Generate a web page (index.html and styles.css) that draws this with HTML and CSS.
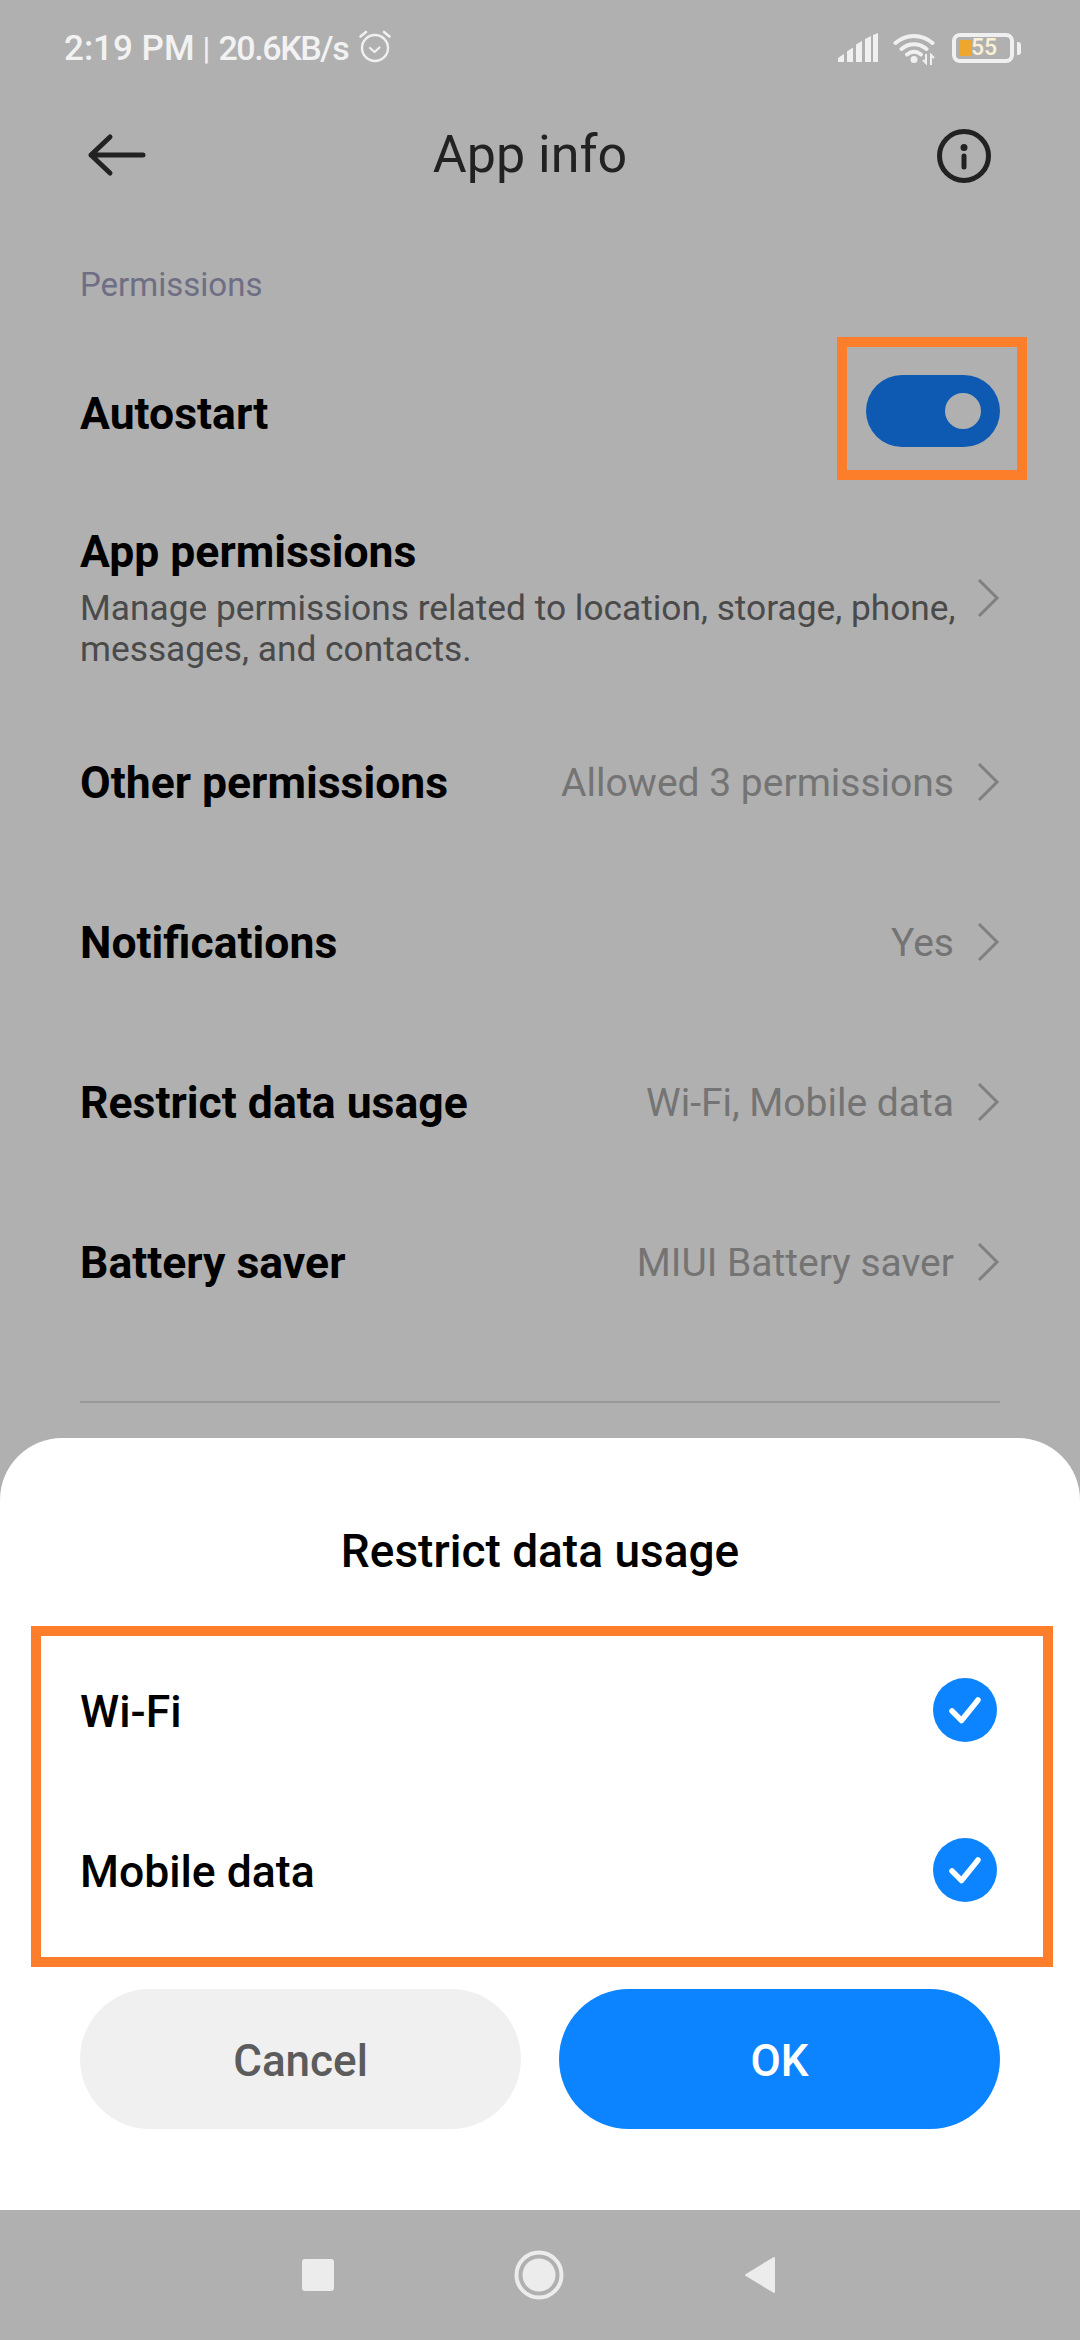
FILE: index.html
```html
<!DOCTYPE html>
<html>

<head>
    <meta name="viewport" content="width=device-width, initial-scale=1">
    <link rel="stylesheet" href="styles.css">
</head>

<body>
    <div class="screen">
        <div class="dimmed">
            <div class="statusBar">
                <span class="statusTime">2:19 PM</span>
                <span class="statusSep">|</span>
                <span class="statusSpeed">20.6KB/s</span>
                <svg class="alarmIcon" width="34" height="34" viewBox="0 0 34 34">
                    <circle cx="17" cy="19" r="13" fill="none" stroke="#f0f0f0" stroke-width="2.4" />
                    <path d="M12 19l4.5 4 5-4.5" fill="none" stroke="#f0f0f0" stroke-width="2.2" stroke-linecap="round" stroke-linejoin="round" />
                    <path d="M2.5 7.5L8 3M31.5 7.5L26 3" fill="none" stroke="#f0f0f0" stroke-width="2.6" stroke-linecap="round" />
                </svg>
                <div class="statusRight">
                    <svg class="signalIcon" width="42" height="30" viewBox="0 0 42 30">
                        <path d="M1 29v-4l6-4v8zM10 29V18.5l6-4V29zM19 29V11.5l6-3.5V29zM28 29V6l6-3v26zM36 29V2l5-2v29z" fill="#f0f0f0" />
                    </svg>
                    <svg class="wifiIcon" width="44" height="34" viewBox="0 0 44 34">
                        <path d="M2.5 11C13 1.5 29 1.5 39.5 11M8.5 17C16 10.5 26 10.5 33.5 17" fill="none" stroke="#f0f0f0" stroke-width="4" stroke-linecap="round" />
                        <path d="M14 22.5c4.5-3.5 9.5-3.5 14 0" fill="none" stroke="#f0f0f0" stroke-width="4" stroke-linecap="round" />
                        <circle cx="21" cy="27.5" r="3.5" fill="#f0f0f0" />
                        <path d="M33 22v9l-3-3M38 33v-10l3 3" fill="none" stroke="#f0f0f0" stroke-width="2" />
                    </svg>
                    <div class="battery">
                        <div class="batteryBody">
                            <div class="batteryFill"></div>
                            <span class="batteryText">55</span>
                        </div>
                        <div class="batteryNub"></div>
                    </div>
                </div>
            </div>

            <div class="header">
                <svg class="backIcon" width="62" height="48" viewBox="0 0 62 48">
                    <path d="M26 6L7 24l19 18M7 24h52" fill="none" stroke="#222" stroke-width="5" stroke-linecap="round" stroke-linejoin="round" />
                </svg>
                <h1 class="title">App info</h1>
                <svg class="infoIcon" width="56" height="56" viewBox="0 0 56 56">
                    <circle cx="28" cy="28" r="24.5" fill="none" stroke="#222" stroke-width="5" />
                    <circle cx="28" cy="19.5" r="3.5" fill="#222" />
                    <path d="M28 28v11" stroke="#222" stroke-width="5" stroke-linecap="round" />
                </svg>
            </div>

            <div class="sectionLabel">Permissions</div>

            <div class="row rowAutostart">
                <span class="rowName">Autostart</span>
                <div class="markBox">
                    <div class="toggle">
                        <div class="toggleKnob"></div>
                    </div>
                </div>
            </div>

            <div class="row rowTall">
                <div class="rowText">
                    <span class="rowName">App permissions</span>
                    <span class="rowSub">Manage permissions related to location, storage, phone, messages, and contacts.</span>
                </div>
                <svg class="chevron" width="24" height="40" viewBox="0 0 24 40">
                    <path d="M3 2l18 18L3 38" fill="none" stroke="#808080" stroke-width="3" />
                </svg>
            </div>

            <div class="row">
                <span class="rowName">Other permissions</span>
                <span class="rowValue">Allowed 3 permissions</span>
                <svg class="chevron" width="24" height="40" viewBox="0 0 24 40">
                    <path d="M3 2l18 18L3 38" fill="none" stroke="#808080" stroke-width="3" />
                </svg>
            </div>

            <div class="row">
                <span class="rowName">Notifications</span>
                <span class="rowValue">Yes</span>
                <svg class="chevron" width="24" height="40" viewBox="0 0 24 40">
                    <path d="M3 2l18 18L3 38" fill="none" stroke="#808080" stroke-width="3" />
                </svg>
            </div>

            <div class="row">
                <span class="rowName">Restrict data usage</span>
                <span class="rowValue">Wi-Fi, Mobile data</span>
                <svg class="chevron" width="24" height="40" viewBox="0 0 24 40">
                    <path d="M3 2l18 18L3 38" fill="none" stroke="#808080" stroke-width="3" />
                </svg>
            </div>

            <div class="row">
                <span class="rowName">Battery saver</span>
                <span class="rowValue">MIUI Battery saver</span>
                <svg class="chevron" width="24" height="40" viewBox="0 0 24 40">
                    <path d="M3 2l18 18L3 38" fill="none" stroke="#808080" stroke-width="3" />
                </svg>
            </div>

            <div class="divider"></div>
        </div>

        <div class="sheet">
            <h2 class="sheetTitle">Restrict data usage</h2>
            <div class="options">
                <div class="option">
                    <span>Wi-Fi</span>
                    <svg width="64" height="64" viewBox="0 0 64 64">
                        <circle cx="32" cy="32" r="32" fill="#0d84ff" />
                        <path d="M19 33l9.5 9.5L45 22" fill="none" stroke="#fff" stroke-width="5.5" stroke-linecap="round" stroke-linejoin="round" />
                    </svg>
                </div>
                <div class="option">
                    <span>Mobile data</span>
                    <svg width="64" height="64" viewBox="0 0 64 64">
                        <circle cx="32" cy="32" r="32" fill="#0d84ff" />
                        <path d="M19 33l9.5 9.5L45 22" fill="none" stroke="#fff" stroke-width="5.5" stroke-linecap="round" stroke-linejoin="round" />
                    </svg>
                </div>
            </div>
            <div class="buttons">
                <div class="btn btnCancel">Cancel</div>
                <div class="btn btnOk">OK</div>
            </div>
        </div>

        <div class="navBar">
            <div class="navSquare"></div>
            <svg width="50" height="50" viewBox="0 0 50 50">
                <circle cx="25" cy="25" r="22.5" fill="none" stroke="#ececec" stroke-width="4" />
                <circle cx="25" cy="25" r="16.5" fill="#ececec" />
            </svg>
            <svg width="32" height="38" viewBox="0 0 32 38">
                <path d="M30 2v34L2 19z" fill="#ececec" stroke="#ececec" stroke-width="2" stroke-linejoin="round" />
            </svg>
        </div>
    </div>
</body>

</html>
```

FILE: styles.css
```css
* {
    box-sizing: border-box;
}

body {
    margin: 0;
    font-family: Roboto, sans-serif;
    background: #b0b0b0;
}

.screen {
    width: 1080px;
    height: 2340px;
    display: flex;
    flex-direction: column;
    overflow: hidden;
}

.dimmed {
    height: 1438px;
    background: #b0b0b0;
}

/* Status bar */

.statusBar {
    height: 100px;
    padding: 0 59px 4px 64px;
    display: flex;
    align-items: center;
    color: #f2f2f2;
    font-size: 34px;
    font-weight: 500;
}

.statusTime {
    font-size: 35px;
}

.statusSep {
    margin: 0 8px;
    font-weight: 400;
    font-size: 32px;
}

.statusSpeed {
    letter-spacing: -1.4px;
}

.alarmIcon {
    margin: -4px 0 0 10px;
}

.statusRight {
    margin-left: auto;
    display: flex;
    align-items: center;
}

.wifiIcon {
    margin: 2px 0 0 14px;
}

.battery {
    margin-left: 15px;
    display: flex;
    align-items: center;
}

.batteryBody {
    width: 62px;
    height: 30px;
    border: 4px solid #f0f0f0;
    border-radius: 8px;
    padding: 3px;
    display: flex;
    align-items: center;
    position: relative;
}

.batteryFill {
    width: 13px;
    height: 16px;
    background: #eea72c;
}

.batteryText {
    position: absolute;
    left: 15px;
    top: -3px;
    font-size: 23px;
    line-height: 28px;
    font-weight: 500;
    color: #fbf0d2;
}

.batteryNub {
    width: 4px;
    height: 13px;
    margin-left: 3px;
    border-radius: 0 3px 3px 0;
    background: #f0f0f0;
}

/* Header */

.header {
    height: 108px;
    padding: 0 88px 0 84px;
    display: flex;
    align-items: center;
    justify-content: space-between;
}

.title {
    margin: 0 22px 0 0;
    font-size: 52px;
    font-weight: 400;
    color: #222;
}

.backIcon {
    margin-top: 2px;
}

.infoIcon {
    margin-top: 3px;
}

/* Rows */

.sectionLabel {
    margin: 58px 0 29px 80px;
    height: 38px;
    line-height: 38px;
    font-size: 33px;
    color: #6e6e84;
}

.row {
    height: 160px;
    padding: 0 80px;
    display: flex;
    align-items: center;
}

.rowAutostart {
    justify-content: space-between;
}

.rowTall {
    height: 209px;
}

.rowTall .chevron {
    margin-left: 12px;
}

.rowText {
    flex: 1;
    display: flex;
    flex-direction: column;
}

.rowName {
    font-size: 44.5px;
    font-weight: 700;
    color: #000;
}

.row > .rowName,
.rowValue {
    padding-top: 2px;
}

.rowSub {
    margin-top: 10px;
    font-size: 35.3px;
    line-height: 41px;
    color: #4a4a4a;
}

.rowValue {
    margin-left: auto;
    font-size: 39px;
    color: #747474;
}

.chevron {
    margin-left: 22px;
    flex-shrink: 0;
}

.markBox {
    width: 190px;
    height: 143px;
    margin: 0 -27px 9px 0;
    padding: 5px 0 0 2px;
    border: 10px solid #fd7e2a;
    display: flex;
    align-items: center;
    justify-content: center;
}

.toggle {
    width: 134px;
    height: 72px;
    border-radius: 36px;
    background: #0e5ab3;
    display: flex;
    align-items: center;
    justify-content: flex-end;
    padding-right: 19px;
}

.toggleKnob {
    width: 36px;
    height: 36px;
    border-radius: 50%;
    background: #b0b0b0;
}

.divider {
    height: 2px;
    margin: 59px 80px 0;
    background: #999;
}

/* Bottom sheet */

.sheet {
    height: 772px;
    border-radius: 62px 62px 0 0;
    background: #fff;
}

.sheetTitle {
    margin: 0;
    padding-top: 88px;
    height: 188px;
    line-height: 50px;
    text-align: center;
    font-size: 46px;
    font-weight: 500;
    color: #000;
}

.options {
    margin: 0 27px 0 31px;
    height: 341px;
    padding: 0 46px 0 39px;
    border: 10px solid #fd7e2a;
    display: flex;
    flex-direction: column;
    gap: 12px;
}

.option {
    height: 148px;
    display: flex;
    align-items: center;
    justify-content: space-between;
    font-size: 44.5px;
    font-weight: 500;
    color: #000;
}

.option span {
    padding-top: 4px;
}

.buttons {
    margin-top: 22px;
    padding: 0 80px;
    display: flex;
    justify-content: space-between;
}

.btn {
    width: 441px;
    height: 140px;
    padding-top: 3px;
    border-radius: 70px;
    display: flex;
    align-items: center;
    justify-content: center;
    font-size: 44px;
    font-weight: 500;
}

.btnCancel {
    background: #f0f0f0;
    color: #5c5c5c;
}

.btnOk {
    background: #0d84ff;
    color: #fff;
}

/* Navigation bar */

.navBar {
    height: 130px;
    background: #b0b0b0;
    display: flex;
    align-items: center;
    padding: 0 304px 0 302px;
    justify-content: space-between;
}

.navSquare {
    width: 32px;
    height: 32px;
    border-radius: 3px;
    background: #ececec;
}
```
